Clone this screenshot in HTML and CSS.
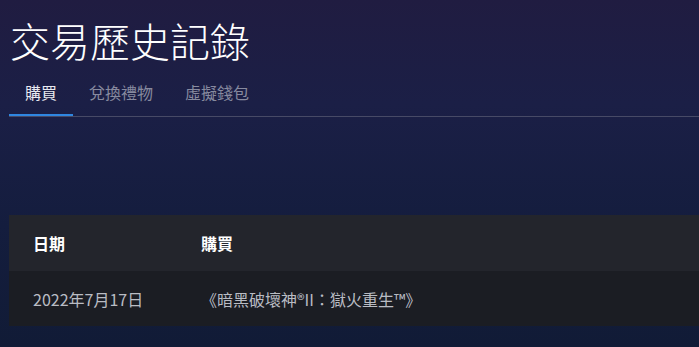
FILE: index.html
```html
<!DOCTYPE html>
<html lang="zh-Hant">
<head>
    <meta charset="UTF-8">
    <meta name="viewport" content="width=device-width, initial-scale=1.0">
    <title>交易歷史記錄</title>
    <link rel="stylesheet" href="styles.css">
</head>
<body>
    <div class="page">
        <!-- Title -->
        <h1 class="page-title">交易歷史記錄</h1>

        <!-- Tabs -->
        <nav class="tabs">
            <a href="#" class="tab active">購買</a>
            <a href="#" class="tab">兌換禮物</a>
            <a href="#" class="tab">虛擬錢包</a>
        </nav>

        <!-- History Table -->
        <div class="history">
            <div class="history-row history-head">
                <div class="col-date">日期</div>
                <div class="col-item">購買</div>
            </div>
            <div class="history-row">
                <div class="col-date">2022年7月17日</div>
                <div class="col-item">《暗黑破壞神®II：獄火重生™》</div>
            </div>
        </div>
    </div>
</body>
</html>
```

FILE: styles.css
```css
/* General Styling */
html, body {
    height: 100%;
}

body {
    margin: 0;
    font-family: 'Noto Sans CJK TC', 'Noto Sans', sans-serif;
    color: #e6e7ee;
    background: linear-gradient(180deg, #201c41 0%, #1b1f46 30%, #141d3e 65%, #111b36 100%);
    overflow: hidden;
}

.page {
    padding: 16px 0 0 9px;
}

.page-title {
    margin: 0 0 7px 1px;
    font-size: 40px;
    font-weight: 300;
    line-height: 48px;
    color: #ffffff;
}

/* Tabs */
.tabs {
    display: flex;
    border-bottom: 1px solid #474a66;
}

.tab {
    padding: 9px 16px 10px;
    font-size: 16px;
    line-height: 24px;
    color: #878a9f;
    text-decoration: none;
    border-bottom: 2px solid transparent;
}

.tab.active {
    color: #e8e9f0;
    border-bottom-color: #2f86e0;
}

/* History Table */
.history {
    margin-top: 98px;
    font-size: 16px;
}

.history-row {
    display: flex;
    align-items: center;
    height: 55px;
    background-color: #1b1d23;
    color: #b9bcc3;
}

.history-head {
    height: 56px;
    background-color: #23252c;
    color: #ffffff;
    font-weight: 700;
}

.col-date {
    width: 168px;
    padding-left: 24px;
}

.col-item {
    flex: 1;
}
```
